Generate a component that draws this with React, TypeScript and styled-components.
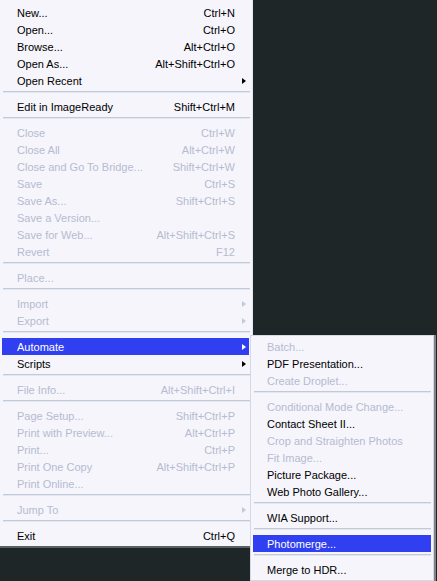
import { ReactElement } from 'react'
import styled, { createGlobalStyle } from 'styled-components'

const GlobalStyle = createGlobalStyle`
  body {
    margin: 0;
    background-color: #1e2628;
    font-family: 'Liberation Sans', Arial, sans-serif;
    font-size: 11px;
  }
`

type Entry =
  | { sep: true }
  | { label: string; keys?: string; off?: boolean; sub?: boolean; active?: boolean; sep?: false }

const SEP: Entry = { sep: true }

const fileMenu: Entry[] = [
  { label: 'New...', keys: 'Ctrl+N' },
  { label: 'Open...', keys: 'Ctrl+O' },
  { label: 'Browse...', keys: 'Alt+Ctrl+O' },
  { label: 'Open As...', keys: 'Alt+Shift+Ctrl+O' },
  { label: 'Open Recent', sub: true },
  SEP,
  { label: 'Edit in ImageReady', keys: 'Shift+Ctrl+M' },
  SEP,
  { label: 'Close', keys: 'Ctrl+W', off: true },
  { label: 'Close All', keys: 'Alt+Ctrl+W', off: true },
  { label: 'Close and Go To Bridge...', keys: 'Shift+Ctrl+W', off: true },
  { label: 'Save', keys: 'Ctrl+S', off: true },
  { label: 'Save As...', keys: 'Shift+Ctrl+S', off: true },
  { label: 'Save a Version...', off: true },
  { label: 'Save for Web...', keys: 'Alt+Shift+Ctrl+S', off: true },
  { label: 'Revert', keys: 'F12', off: true },
  SEP,
  { label: 'Place...', off: true },
  SEP,
  { label: 'Import', sub: true, off: true },
  { label: 'Export', sub: true, off: true },
  SEP,
  { label: 'Automate', sub: true, active: true },
  { label: 'Scripts', sub: true },
  SEP,
  { label: 'File Info...', keys: 'Alt+Shift+Ctrl+I', off: true },
  SEP,
  { label: 'Page Setup...', keys: 'Shift+Ctrl+P', off: true },
  { label: 'Print with Preview...', keys: 'Alt+Ctrl+P', off: true },
  { label: 'Print...', keys: 'Ctrl+P', off: true },
  { label: 'Print One Copy', keys: 'Alt+Shift+Ctrl+P', off: true },
  { label: 'Print Online...', off: true },
  SEP,
  { label: 'Jump To', sub: true, off: true },
  SEP,
  { label: 'Exit', keys: 'Ctrl+Q' },
]

const automateMenu: Entry[] = [
  { label: 'Batch...', off: true },
  { label: 'PDF Presentation...' },
  { label: 'Create Droplet...', off: true },
  SEP,
  { label: 'Conditional Mode Change...', off: true },
  { label: 'Contact Sheet II...' },
  { label: 'Crop and Straighten Photos', off: true },
  { label: 'Fit Image...', off: true },
  { label: 'Picture Package...' },
  { label: 'Web Photo Gallery...' },
  SEP,
  { label: 'WIA Support...' },
  SEP,
  { label: 'Photomerge...', active: true },
  SEP,
  { label: 'Merge to HDR...' },
]

const Screen = styled.div`
  position: relative;
  width: 437px;
  height: 581px;
  overflow: hidden;
`

const MainMenu = styled.div`
  width: 252px;
  padding: 4px 0 2px;
  background-color: #f5f5fb;
  border-right: 1px solid #e2e6f0;
  box-shadow: 0 2px 0 #5b6063;
`

// flyout for the highlighted "Automate" entry, lies over the page
const SubMenu = styled.div`
  position: absolute;
  left: 250px;
  top: 335px;
  width: 182px;
  padding: 2px 0;
  background-color: #f5f5fb;
  border: 1px solid #d4d9e6;
  box-shadow: 2px 0 0 #7d8386;
`

const Row = styled.div<{ $off?: boolean; $active?: boolean; $inset: number }>`
  display: grid;
  grid-template-columns: 1fr auto 14px;
  align-items: center;
  height: 17px;
  margin: 0 ${(p) => (p.$inset === 15 ? '3px 0 2px' : '2px 0 2px')};
  padding-left: ${(p) => p.$inset}px;
  white-space: nowrap;
  color: ${(p) => (p.$active ? '#ffffff' : p.$off ? '#b6bbd1' : '#000000')};
  background-color: ${(p) => (p.$active ? '#3040f0' : 'transparent')};
`

const Keys = styled.span`
  text-align: right;
`

const Arrow = styled.span<{ $color: string }>`
  justify-self: end;
  margin-right: 3px;
  width: 0;
  height: 0;
  border-top: 3.5px solid transparent;
  border-bottom: 3.5px solid transparent;
  border-left: 4px solid ${(p) => p.$color};
`

const Separator = styled.div`
  box-sizing: border-box;
  height: 9px;
  padding-top: 2px;
  margin: 0 2px 0 3px;
  &::after {
    content: '';
    display: block;
    height: 1px;
    background-color: #c2c9d8;
    border-bottom: 1px solid #e3e7ef;
  }
`

const MenuList = ({ items, inset }: { items: Entry[]; inset: number }): ReactElement => (
  <>
    {items.map((item, i) => {
      if (item.sep) return <Separator key={i} />
      const arrowColor = item.active ? '#ffffff' : item.off ? '#c4c9da' : '#000000'
      return (
        <Row key={i} $off={item.off} $active={item.active} $inset={inset}>
          <span>{item.label}</span>
          <Keys>{item.keys}</Keys>
          {item.sub ? <Arrow $color={arrowColor} /> : <span />}
        </Row>
      )
    })}
  </>
)

export default function App(): ReactElement {
  return (
    <Screen>
      <GlobalStyle />
      <MainMenu>
        <MenuList items={fileMenu} inset={15} />
      </MainMenu>
      <SubMenu>
        <MenuList items={automateMenu} inset={14} />
      </SubMenu>
    </Screen>
  )
}
